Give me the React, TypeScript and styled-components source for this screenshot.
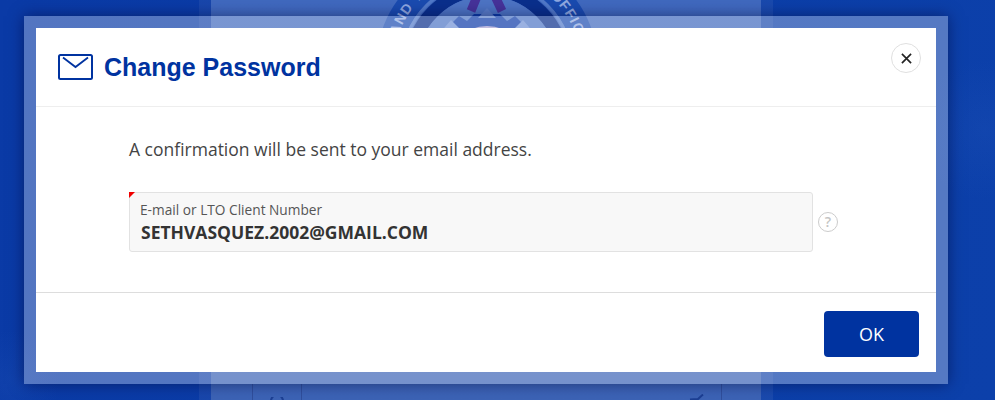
import React from 'react';
import styled, { createGlobalStyle } from 'styled-components';

const GlobalStyle = createGlobalStyle`
  html, body {
    margin: 0;
    padding: 0;
    background: #0b3ea8;
  }
  * {
    box-sizing: border-box;
  }
`;

const Page = styled.div`
  position: relative;
  width: 995px;
  height: 400px;
  overflow: hidden;
  font-family: 'Open Sans', sans-serif;
  background:
    radial-gradient(circle at 985px 130px, rgba(40, 90, 190, 0.2), transparent 70px),
    radial-gradient(circle at 10px 380px, rgba(40, 90, 190, 0.2), transparent 50px),
    linear-gradient(100deg, #0a3aa6 0%, #0b3da8 50%, #0c40aa 100%);
`;

const Backdrop = styled.div`
  display: flex;
  height: 400px;
  padding-left: 199px;
`;

const PanelEdge = styled.div`
  width: 574px;
  height: 400px;
  padding: 0 12px;
  background: rgba(255, 255, 255, 0.06);
`;

const Panel = styled.div`
  display: flex;
  flex-direction: column;
  justify-content: space-between;
  align-items: center;
  height: 100%;
  background: linear-gradient(180deg, #4069bf 0%, #3c63b6 100%);
  overflow: hidden;
`;

const LogoSlot = styled.div`
  display: flex;
  justify-content: center;
  height: 60px;
`;

const BottomRow = styled.div`
  display: flex;
  justify-content: space-between;
  width: 100%;
  height: 16px;
  padding: 0 39px 0 41px;
`;

const BottomCell = styled.div`
  display: flex;
  justify-content: center;
  align-items: flex-end;
  width: 50px;
  height: 16px;
  border-left: ${p => (p.$side === 'right' ? 'none' : '1px solid rgba(0, 0, 60, 0.2)')};
  border-right: 1px solid rgba(0, 0, 60, 0.2);
`;

const Overlay = styled.div`
  position: absolute;
  top: 16px;
  left: 24px;
  width: 924px;
  height: 368px;
  border: 12px solid rgba(255, 255, 255, 0.3);
  box-shadow: 0 0 14px rgba(0, 5, 50, 0.5);
`;

const Modal = styled.div`
  display: flex;
  flex-direction: column;
  width: 900px;
  height: 344px;
  background: #fff;
`;

const Header = styled.div`
  display: flex;
  align-items: center;
  justify-content: space-between;
  height: 79px;
  padding: 0 15px 0 22px;
  border-bottom: 1px solid #eee;
`;

const TitleGroup = styled.div`
  display: flex;
  align-items: center;
  gap: 11px;
`;

const Title = styled.h1`
  margin: 0;
  font-family: 'Liberation Sans', Arial, sans-serif;
  font-size: 25px;
  font-weight: 700;
  line-height: 30px;
  color: #0033a0;
`;

const CloseButton = styled.button`
  display: flex;
  align-items: center;
  justify-content: center;
  width: 30px;
  height: 30px;
  margin-bottom: 18px;
  padding: 0;
  border: 1px solid #e0e0e0;
  border-radius: 50%;
  background: #fff;
`;

const Body = styled.div`
  height: 186px;
  padding: 30px 0 0 93px;
  border-bottom: 1px solid #ddd;
`;

const Message = styled.p`
  margin: 0 0 31px;
  font-size: 17.5px;
  line-height: 24px;
  color: #444;
`;

const FieldRow = styled.div`
  display: flex;
  align-items: center;
  gap: 5px;
`;

const Field = styled.div`
  position: relative;
  width: 684px;
  height: 60px;
  padding: 8px 10px 0;
  background: #f8f8f8;
  border: 1px solid #e2e2e2;
  border-radius: 3px;

  &::before {
    content: '';
    position: absolute;
    top: -1px;
    left: -1px;
    border-top: 6px solid #f00000;
    border-right: 6px solid transparent;
  }
`;

const FieldLabel = styled.div`
  font-size: 13.7px;
  line-height: 18px;
  color: #555;
`;

const FieldValue = styled.div`
  margin-left: 1px;
  font-size: 17.5px;
  font-weight: 700;
  line-height: 27px;
  color: #333;
`;

const HelpBadge = styled.div`
  display: flex;
  align-items: center;
  justify-content: center;
  width: 20px;
  height: 20px;
  border: 1px solid #ccc;
  border-radius: 50%;
  font-size: 14px;
  font-weight: 600;
  line-height: 1;
  color: #c4c4c4;
`;

const Footer = styled.div`
  display: flex;
  justify-content: flex-end;
  align-items: flex-start;
  height: 79px;
  padding: 18px 17px 0 0;
`;

const OkButton = styled.button`
  width: 95px;
  height: 46px;
  border: none;
  border-radius: 4px;
  background: #0033a0;
  color: #fff;
  font-family: 'Open Sans', sans-serif;
  font-size: 18px;
`;

const MailIcon = () => (
  <svg width="35" height="26" viewBox="0 0 35 26" fill="none" stroke="#0033a0" strokeWidth="2">
    <rect x="1" y="1" width="33" height="24" rx="1.5" />
    <path d="M5 3.5 L17.5 13 L30 3.5" strokeWidth="1.8" />
  </svg>
);

const CloseIcon = () => (
  <svg width="11" height="11" viewBox="0 0 12 12" stroke="#222" strokeWidth="1.8" fill="none">
    <path d="M1 1 L11 11 M11 1 L1 11" />
  </svg>
);

// seal behind the dialog, only its top edge shows
const SealLogo = () => (
  <svg width="232" height="232" viewBox="-116 -116 232 232" style={{ marginTop: -50, marginLeft: 2, flexShrink: 0 }} fill="none">
    <circle r="99" stroke="#1a4bb0" strokeWidth="24" />
    <circle r="85.5" stroke="#5179c9" strokeWidth="3" />
    <circle r="76.5" stroke="#0a2f8c" strokeWidth="13" />
    <circle r="70" fill="#4d74c4" />
    <path id="seal-band" d="M -94 0 A 94 94 0 0 1 94 0" />
    <text fill="#8fa8e0" fontFamily="'Liberation Sans', sans-serif" fontWeight="700" fontSize="14" letterSpacing="1" textAnchor="middle">
      <textPath href="#seal-band" startOffset="50%">LAND TRANSPORTATION OFFICE</textPath>
    </text>
    <path d="M-36 -42 L-28 -50 L-20 -45 L-13 -52 L13 -52 L20 -45 L28 -50 L36 -42 L30 -30 L-30 -30 Z" fill="#0c3aa8" />
    <path d="M-48 -32 L-36 -46 L-28 -38 L28 -38 L36 -46 L48 -32 L40 -18 L-40 -18 Z" fill="#6f90d4" />
    <circle r="40" fill="#a59fd2" />
    <circle r="36" fill="#5f84cc" />
    <path d="M0 -58 L-9 -48 L9 -48 Z" fill="#5a7dc9" />
    <path d="M-9 -72 L-16 -55 M7 -72 L15 -55" stroke="#46329a" strokeWidth="9" />
  </svg>
);

const App = () => {
  return (
    <Page>
      <GlobalStyle />
      <Backdrop>
        <PanelEdge>
          <Panel>
            <LogoSlot>
              <SealLogo />
            </LogoSlot>
            <BottomRow>
              <BottomCell>
                <svg width="16" height="3" viewBox="0 0 16 3" fill="none" stroke="#1c3f94" strokeWidth="2">
                  <path d="M2 4 A6 6 0 0 1 14 4" />
                </svg>
              </BottomCell>
              <BottomCell $side="right">
                <svg width="16" height="6" viewBox="0 0 16 6" fill="none" stroke="#1c3f94" strokeWidth="2">
                  <path d="M1 5.5 L9 5 L14 0.5" />
                </svg>
              </BottomCell>
            </BottomRow>
          </Panel>
        </PanelEdge>
      </Backdrop>
      <Overlay>
        <Modal>
          <Header>
            <TitleGroup>
              <MailIcon />
              <Title>Change Password</Title>
            </TitleGroup>
            <CloseButton aria-label="Close">
              <CloseIcon />
            </CloseButton>
          </Header>
          <Body>
            <Message>A confirmation will be sent to your email address.</Message>
            <FieldRow>
              <Field>
                <FieldLabel>E-mail or LTO Client Number</FieldLabel>
                <FieldValue>SETHVASQUEZ.2002@GMAIL.COM</FieldValue>
              </Field>
              <HelpBadge>?</HelpBadge>
            </FieldRow>
          </Body>
          <Footer>
            <OkButton>OK</OkButton>
          </Footer>
        </Modal>
      </Overlay>
    </Page>
  );
};

export default App;
